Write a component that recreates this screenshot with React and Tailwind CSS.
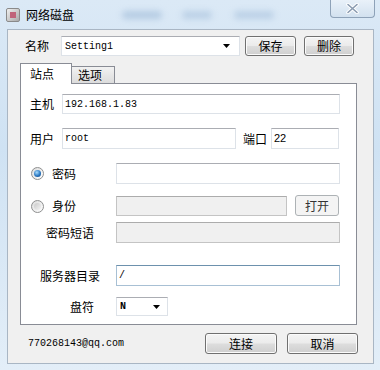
import React from "react";

const cjk = { fontFamily: '"Noto Sans CJK SC", "Noto Sans", sans-serif' };
const mono = { fontFamily: '"Liberation Mono", "DejaVu Sans Mono", monospace' };

function Field({ w, h = 20, value, disabled, focus, className = "" }) {
  return (
    <div
      className={`flex items-center border px-[2px] text-[10px] text-black ${
        disabled
          ? "bg-[#f0f0f0] border-[#c4c4c4] border-t-[#acacac]"
          : focus
          ? "bg-white border-[#a8c0d4] border-t-[#6d91ad]"
          : "bg-white border-[#dde2e8] border-t-[#abadb3]"
      } ${className}`}
      style={{ width: w, height: h, ...mono }}
    >
      {value}
    </div>
  );
}

function Btn({ w, h = 20, children }) {
  return (
    <div
      className="flex items-center justify-center rounded-[3px] border border-[#707070] bg-[linear-gradient(180deg,#f4f4f4_0%,#ebebeb_48%,#dddddd_52%,#cfcfcf_100%)] text-[12px] text-black shadow-[inset_0_0_0_1px_#fbfbfb]"
      style={{ width: w, height: h, ...cjk }}
    >
      {children}
    </div>
  );
}

function Radio({ checked }) {
  return (
    <div className="flex h-[13px] w-[13px] items-center justify-center rounded-full border border-[#8e8f8f] bg-[linear-gradient(135deg,#dcdcdc,#ffffff)]">
      {checked ? (
        <div className="h-[7px] w-[7px] rounded-full bg-[radial-gradient(circle_at_40%_35%,#a8dcff,#2a78c2_55%,#0f3f7a)]" />
      ) : (
        <div className="h-[7px] w-[7px] rounded-full bg-[linear-gradient(135deg,#c9c9c9,#f4f4f4)]" />
      )}
    </div>
  );
}

function Arrow() {
  return (
    <svg width="7" height="4" viewBox="0 0 7 4">
      <path d="M0 0 L7 0 L3.5 4 Z" fill="#000" />
    </svg>
  );
}

export default function App() {
  return (
    <div
      className="relative h-[370px] w-[380px] overflow-hidden bg-[linear-gradient(180deg,#dbe9f6_0%,#cfe2f3_40%,#e3eef8_100%)] text-[12px]"
      style={cjk}
    >
      {/* title bar */}
      <div className="flex h-[29px] items-center pl-[6px]">
        <div className="flex h-[14px] w-[14px] items-center justify-center rounded-[2px] border border-[#8a8a8a] bg-[linear-gradient(135deg,#f0f0f0,#a9a9a9)]">
          <div className="h-[6px] w-[6px] bg-[#c0647a]" />
        </div>
        <span className="ml-[6px] text-[12px] text-black">网络磁盘</span>
        <div className="ml-[48px] h-[8px] w-[40px] rounded-full bg-[#9cb8d6] opacity-60 blur-[3px]" />
        <div className="ml-[20px] h-[8px] w-[30px] rounded-full bg-[#9cb8d6] opacity-50 blur-[3px]" />
        <div className="ml-[22px] h-[8px] w-[40px] rounded-full bg-[#9cb8d6] opacity-50 blur-[3px]" />
        <div className="mb-[11px] ml-auto mr-[5px] flex h-[18px] w-[45px] items-center justify-center rounded-b-[4px] border border-t-0 border-[#8ea2b8] bg-[linear-gradient(180deg,#e9f1f9,#d2e1ef)]">
          <svg width="13" height="11" viewBox="0 0 13 11">
            <path d="M2 1.5 L11 9.5 M11 1.5 L2 9.5" stroke="#ffffff" strokeWidth="3.5" strokeLinecap="round" />
            <path d="M2 1.5 L11 9.5 M11 1.5 L2 9.5" stroke="#8a9bb0" strokeWidth="1.6" strokeLinecap="round" />
          </svg>
        </div>
      </div>

      {/* client area */}
      <div className="ml-[7px] flex h-[335px] w-[367px] flex-col border border-[#a9b6c4] bg-[#f0f0f0]">
        {/* name row */}
        <div className="mt-[6px] flex h-[20px] items-center pl-[17px]">
          <span className="w-[36px] text-black">名称</span>
          <div
            className="flex h-[20px] w-[179px] items-center justify-between border border-[#dde2e8] border-t-[#abadb3] bg-white pl-[3px] pr-[9px] text-[10px]"
            style={mono}
          >
            <span>Setting1</span>
            <Arrow />
          </div>
          <div className="ml-[5px]">
            <Btn w={51}>保存</Btn>
          </div>
          <div className="ml-[8px]">
            <Btn w={50}>删除</Btn>
          </div>
        </div>

        {/* tabs */}
        <div className="mt-[7px] flex h-[20px] items-end pl-[12px]">
          <div className="relative z-10 -mb-px flex h-[21px] w-[52px] items-center justify-center border border-b-0 border-[#898c95] bg-white pr-[8px] text-black">
            站点
          </div>
          <div className="flex h-[17px] w-[43px] items-center justify-center border border-l-0 border-b-0 border-[#898c95] bg-[linear-gradient(180deg,#f2f2f2,#dcdcdc)] pr-[6px] text-black">
            选项
          </div>
        </div>

        {/* panel */}
        <div className="ml-[12px] flex h-[242px] w-[337px] flex-col border border-[#898c95] bg-white">
          <div className="mt-[10px] flex items-center pl-[9px]">
            <span className="w-[32px]">主机</span>
            <Field w={278} value="192.168.1.83" />
          </div>

          <div className="mt-[14px] flex items-center pl-[9px]">
            <span className="w-[32px]">用户</span>
            <Field w={174} h={21} value="root" />
            <span className="ml-[7px] w-[28px]">端口</span>
            <Field w={68} h={21} value={<span style={{ fontFamily: '"Liberation Sans", sans-serif', fontSize: 11 }}>22</span>} />
          </div>

          <div className="mt-[14px] flex items-center pl-[10px]">
            <Radio checked />
            <span className="ml-[8px] w-[64px]">密码</span>
            <Field w={224} h={21} />
          </div>

          <div className="mt-[12px] flex items-center pl-[10px]">
            <Radio />
            <span className="ml-[8px] w-[64px]">身份</span>
            <Field w={171} disabled />
            <div className="ml-[8px] -mt-[1px]">
              <div className="flex h-[21px] w-[44px] items-center justify-center rounded-[3px] border border-[#adb2b5] bg-[#f4f4f4] text-[12px] text-[#333]">
                打开
              </div>
            </div>
          </div>

          <div className="mt-[6px] flex items-center pl-[25px]">
            <span className="w-[70px]">密码短语</span>
            <Field w={224} h={21} disabled />
          </div>

          <div className="mt-[22px] flex items-center pl-[19px]">
            <span className="w-[76px]">服务器目录</span>
            <Field w={224} h={21} value="/" focus />
          </div>

          <div className="mt-[11px] flex items-center pl-[49px]">
            <span className="w-[46px]">盘符</span>
            <div
              className="flex h-[19px] w-[52px] items-center justify-between border border-[#dde2e8] border-t-[#abadb3] bg-white pl-[3px] pr-[7px] text-[10px]"
              style={mono}
            >
              <span className="font-bold">N</span>
              <Arrow />
            </div>
          </div>
        </div>

        {/* bottom row */}
        <div className="mt-[8px] flex h-[21px] items-center pl-[20px] pr-[15px]">
          <span className="text-[10px] text-black" style={mono}>
            770268143@qq.com
          </span>
          <div className="ml-auto">
            <Btn w={72} h={21}>连接</Btn>
          </div>
          <div className="ml-[10px]">
            <Btn w={71} h={21}>取消</Btn>
          </div>
        </div>
      </div>
    </div>
  );
}
